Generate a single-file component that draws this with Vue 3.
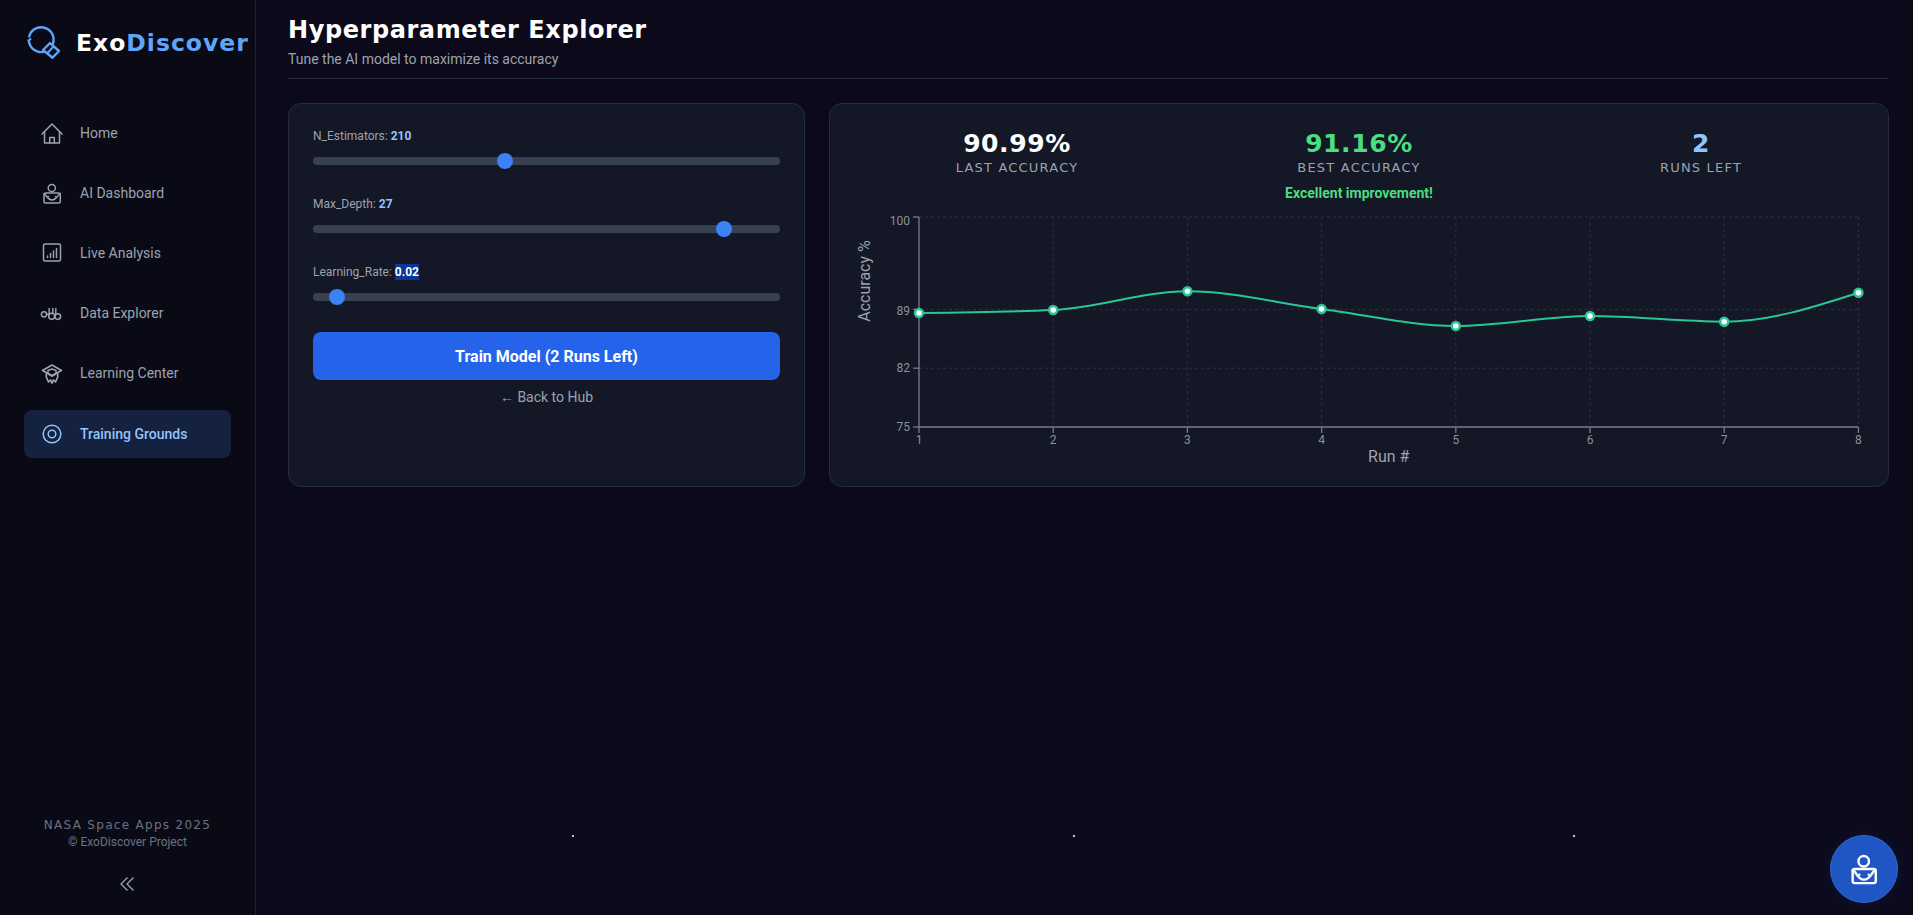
<script setup>
import { ref, computed } from 'vue'

const navItems = [
  { label: 'Home', icon: 'home' },
  { label: 'AI Dashboard', icon: 'bot' },
  { label: 'Live Analysis', icon: 'bars' },
  { label: 'Data Explorer', icon: 'data' },
  { label: 'Learning Center', icon: 'cap' },
  { label: 'Training Grounds', icon: 'target', active: true }
]

const estimators = ref(210)
const depth = ref(27)
const rate = ref(0.02)

// chart frame, in svg coordinates
const left = 65
const right = 1004.4
const top = 10
const bottom = 220
const runs = [88.57, 88.93, 91.16, 89.05, 87.02, 88.21, 87.54, 90.99]
const yTicks = [
  { v: 100, labelY: 18 },
  { v: 89, labelY: 108 },
  { v: 82, labelY: 165.3 },
  { v: 75, labelY: 224 }
]

const xOf = (i) => left + (i * (right - left)) / 7
const yOf = (v) => bottom - ((v - 75) * (bottom - top)) / 25

const points = computed(() => runs.map((v, i) => ({ x: xOf(i), y: yOf(v) })))

// same shape as recharts type="monotone"
const linePath = computed(() => {
  const p = points.value
  const n = p.length
  const sl = []
  for (let i = 0; i < n - 1; i++) sl.push((p[i + 1].y - p[i].y) / (p[i + 1].x - p[i].x))
  const t = [sl[0]]
  for (let i = 1; i < n - 1; i++) {
    const a = sl[i - 1]
    const b = sl[i]
    t.push(a * b <= 0 ? 0 : (Math.sign(a) * 2 * Math.min(Math.abs(a), Math.abs(b), Math.abs(a + b) / 4)))
  }
  t.push(sl[n - 2])
  t[0] = (3 * sl[0] - t[1]) / 2
  t[n - 1] = (3 * sl[n - 2] - t[n - 2]) / 2
  let d = `M${p[0].x},${p[0].y}`
  for (let i = 0; i < n - 1; i++) {
    const h = (p[i + 1].x - p[i].x) / 3
    d += `C${p[i].x + h},${p[i].y + h * t[i]} ${p[i + 1].x - h},${p[i + 1].y - h * t[i + 1]} ${p[i + 1].x},${p[i + 1].y}`
  }
  return d
})
</script>

<template>
  <div class="app">
    <aside class="sidebar">
      <div class="brand">
        <svg class="brand-icon" viewBox="0 0 40 40" fill="none" stroke="#60a5fa" stroke-width="2.4">
          <path d="M5.200 14.500A12.400 12.400 0 1 1 6 23" stroke-linecap="round" />
          <path d="M6 23a12.400 12.400 0 0 1-1.200-5.500" />
          <path d="M4 19.500l3-3" stroke-width="2" />
          <path d="M19 28l7-6.800 9 7.800-6.500 6.700z" stroke-linejoin="round" fill="#0a0a17" />
          <path d="M29.500 24.500 23 31.500" stroke-width="2" />
        </svg>
        <span class="brand-name">Exo<span class="brand-accent">Discover</span></span>
      </div>

      <nav class="nav">
        <a v-for="item in navItems" :key="item.label" class="nav-item" :class="{ active: item.active }">
          <svg class="nav-icon" viewBox="0 0 24 24" fill="none" stroke="currentColor" stroke-width="1.5" stroke-linecap="round" stroke-linejoin="round">
            <template v-if="item.icon === 'home'">
              <path d="M2 13 12 3l10 10" />
              <path d="M4.500 11V22h15V11" />
              <path d="M9.700 22v-5.500h4.600V22" />
            </template>
            <template v-else-if="item.icon === 'bot'">
              <circle cx="11.800" cy="7" r="3.600" />
              <rect x="4" y="12" width="16.300" height="10" rx="1.500" />
              <path d="M4 13c2.500 0 3 6 8 6s5.500-6 8.300-6" />
              <path d="M8.500 15.500h.01M15.500 15.500h.01" />
            </template>
            <template v-else-if="item.icon === 'bars'">
              <rect x="3.500" y="3" width="17" height="17" rx="1.500" />
              <path d="M7.500 16.500v-1.500M10.500 16.500v-4M13.500 16.500v-6.500M16.500 16.500v-9" />
            </template>
            <template v-else-if="item.icon === 'data'">
              <circle cx="4" cy="13.300" r="2.600" />
              <circle cx="11.700" cy="15.300" r="3" />
              <circle cx="17.800" cy="15.600" r="2.800" />
              <path d="M6.600 13.300h3M9.200 7.500v6M12.800 7.500v5M15.800 7.500v6" />
            </template>
            <template v-else-if="item.icon === 'cap'">
              <path d="M12 4 2.500 9.500 12 14.500l9.500-5z" stroke-width="1.7" />
              <path d="M6.300 11.800V16l2.200 5 2-2 1.500 3 1.500-3 2 2 2.200-5v-4.200" stroke-width="1.7" />
              <path d="M8 9.500 12 8l4 1.500v3.500l-4 2.500-4-2.500z" stroke-width="1.4" />
            </template>
            <template v-else>
              <circle cx="12" cy="12" r="8.800" />
              <circle cx="12" cy="12" r="3.800" />
            </template>
          </svg>
          <span>{{ item.label }}</span>
        </a>
      </nav>

      <div class="side-foot">
        <div class="foot-title">NASA Space Apps 2025</div>
        <div class="foot-sub">© ExoDiscover Project</div>
        <svg class="collapse" viewBox="0 0 20 20" fill="none" stroke="#9ca3af" stroke-width="1.3">
          <path d="M9.500 3.500 3 10l6.500 6.500" />
          <path d="M15.500 3.500 9 10l6.500 6.500" />
        </svg>
      </div>
    </aside>

    <main class="main">
      <header class="page-head">
        <h1>Hyperparameter Explorer</h1>
        <p>Tune the AI model to maximize its accuracy</p>
      </header>

      <div class="panels">
        <section class="panel controls">
          <div class="field">
            <label>N_Estimators: <b>{{ estimators }}</b></label>
            <input v-model.number="estimators" type="range" min="10" max="500" step="10" />
          </div>
          <div class="field">
            <label>Max_Depth: <b>{{ depth }}</b></label>
            <input v-model.number="depth" type="range" min="2" max="30" step="1" />
          </div>
          <div class="field">
            <label>Learning_Rate: <b class="selected">{{ rate.toFixed(2) }}</b></label>
            <input v-model.number="rate" type="range" min="0.01" max="0.3" step="0.01" />
          </div>
          <button class="train">Train Model (2 Runs Left)</button>
          <a class="back"><span class="arrow">←</span> Back to Hub</a>
        </section>

        <section class="panel results">
          <div class="stats">
            <div class="stat">
              <div class="stat-value">90.99%</div>
              <div class="stat-label">LAST ACCURACY</div>
            </div>
            <div class="stat">
              <div class="stat-value green">91.16%</div>
              <div class="stat-label">BEST ACCURACY</div>
            </div>
            <div class="stat">
              <div class="stat-value blue">2</div>
              <div class="stat-label">RUNS LEFT</div>
            </div>
          </div>
          <div class="message">Excellent improvement!</div>

          <svg class="chart" viewBox="0 0 1009 255" width="1009" height="255">
            <g class="grid">
              <line v-for="t in yTicks" :key="t.v" :x1="left" :x2="right" :y1="yOf(t.v)" :y2="yOf(t.v)" />
              <line v-for="(r, i) in runs" :key="i" :x1="xOf(i)" :x2="xOf(i)" :y1="top" :y2="bottom" />
            </g>
            <g class="axis">
              <line :x1="left" :x2="left" :y1="top" :y2="bottom" />
              <line :x1="left" :x2="right" :y1="bottom" :y2="bottom" />
              <line v-for="t in yTicks" :key="t.v" :x1="left - 6" :x2="left" :y1="yOf(t.v)" :y2="yOf(t.v)" />
              <line v-for="(r, i) in runs" :key="i" :x1="xOf(i)" :x2="xOf(i)" :y1="bottom" :y2="bottom + 6" />
            </g>
            <g class="ticks">
              <text v-for="t in yTicks" :key="t.v" :x="left - 9" :y="t.labelY" text-anchor="end">{{ t.v }}</text>
              <text v-for="(r, i) in runs" :key="i" :x="xOf(i)" :y="bottom + 16.5" text-anchor="middle">{{ i + 1 }}</text>
            </g>
            <text class="axis-title" x="534.7" y="254.5" text-anchor="middle">Run #</text>
            <text class="axis-title" text-anchor="middle" transform="translate(16 74) rotate(-90)">Accuracy %</text>
            <path class="line" :d="linePath" />
            <circle v-for="(p, i) in points" :key="i" class="dot" :cx="p.x" :cy="p.y" r="4" />
          </svg>
        </section>
      </div>

      <i class="star star-1"></i>
      <i class="star star-2"></i>
      <i class="star star-3"></i>
    </main>

    <button class="assistant">
      <svg viewBox="0 0 24 24" fill="none" stroke="#fff" stroke-width="1.7" stroke-linecap="round" stroke-linejoin="round">
        <circle cx="11.800" cy="6.500" r="3.700" />
        <rect x="4" y="12" width="16.300" height="10" rx="1.500" />
        <path d="M4 13c2.500 0 3 6.500 8 6.500s5.500-6.500 8.300-6.500" />
        <path d="M8.700 16h.01M15.300 16h.01" />
      </svg>
    </button>
  </div>
</template>

<style>
html,
body {
  margin: 0;
  background: #0a0a1a;
}
</style>

<style scoped>
.app {
  display: flex;
  height: 100vh;
  overflow: hidden;
  position: relative;
  background: #0c0a1a;
  color: #9ca3af;
  font-family: Roboto, "Noto Sans", sans-serif;
}

.sidebar {
  width: 255px;
  flex: none;
  display: flex;
  flex-direction: column;
  background: #0a0a17;
  border-right: 1px solid #1f2430;
}

.brand {
  height: 84px;
  display: flex;
  align-items: center;
  gap: 12px;
  padding-left: 24px;
}

.brand-icon {
  width: 40px;
  height: 40px;
  flex: none;
}

.brand-name {
  font-family: "DejaVu Sans", sans-serif;
  font-size: 23.5px;
  font-weight: 700;
  letter-spacing: 1px;
  color: #fff;
  white-space: nowrap;
  position: relative;
  top: 1px;
}

.brand-accent {
  color: #60a5fa;
}

.nav {
  display: flex;
  flex-direction: column;
  gap: 12px;
  padding: 25px 24px 0;
}

.nav-item {
  height: 48px;
  box-sizing: border-box;
  display: flex;
  align-items: center;
  gap: 16px;
  padding-left: 16px;
  border-radius: 8px;
  font-size: 14px;
}

.nav-item.active {
  margin-top: 1px;
  padding-bottom: 1px;
  background: #14213f;
  color: #93c5fd;
  font-weight: 500;
}

.nav-icon {
  width: 24px;
  height: 24px;
  flex: none;
}

.side-foot {
  margin-top: auto;
  padding-bottom: 21px;
  display: flex;
  flex-direction: column;
  align-items: center;
  color: #6b7280;
}

.foot-title {
  font-family: "DejaVu Sans", sans-serif;
  font-size: 12px;
  line-height: 16px;
  letter-spacing: 1.3px;
  white-space: nowrap;
}

.foot-sub {
  font-size: 12px;
  line-height: 16px;
  margin-top: 1px;
}

.collapse {
  width: 20px;
  height: 20px;
  margin-top: 24px;
}

.main {
  flex: 1;
  padding: 14px 24px 0 32px;
  min-width: 0;
}

.page-head {
  padding-bottom: 9px;
  border-bottom: 1px solid #1f2937;
  margin-bottom: 24px;
}

.page-head h1 {
  margin: 0;
  font-family: "DejaVu Sans", sans-serif;
  font-size: 24px;
  line-height: 32px;
  font-weight: 700;
  letter-spacing: 0.58px;
  color: #fff;
}

.page-head p {
  margin: 3px 0 0;
  font-size: 14px;
  line-height: 20px;
}

.panels {
  display: grid;
  grid-template-columns: 517px 1fr;
  gap: 24px;
}

.panel {
  background: #131726;
  border: 1px solid #262c3d;
  border-radius: 13px;
  padding: 24px;
}

.controls {
  display: flex;
  flex-direction: column;
}

.field {
  margin-bottom: 31px;
}

.field label {
  display: block;
  font-size: 12px;
  line-height: 16px;
  margin-bottom: 13px;
}

.field b {
  color: #93c5fd;
  font-weight: 700;
}

.field b.selected {
  display: inline-block;
  background: #0b3596;
  color: #fff;
}

.field input {
  display: block;
  width: 100%;
  height: 8px;
  margin: 0;
  appearance: none;
  -webkit-appearance: none;
  background: #374151;
  border-radius: 4px;
  outline: none;
}

.field input::-webkit-slider-thumb {
  -webkit-appearance: none;
  width: 16px;
  height: 16px;
  border-radius: 50%;
  background: #3b82f6;
}

.train {
  height: 48px;
  border: none;
  border-radius: 8px;
  background: #2563eb;
  color: #fff;
  font-family: inherit;
  font-size: 16px;
  font-weight: 700;
}

.back {
  margin-top: 7px;
  font-size: 14px;
  line-height: 20px;
  text-align: center;
}

.arrow {
  font-family: "Liberation Sans", sans-serif;
}

.stats {
  display: grid;
  grid-template-columns: repeat(3, 1fr);
  gap: 16px;
  text-align: center;
}

.stat-value {
  font-family: "DejaVu Sans", sans-serif;
  font-size: 25px;
  line-height: 32px;
  font-weight: 700;
  letter-spacing: 0.6px;
  color: #fff;
}

.stat-value.green {
  color: #4ade80;
}

.stat-value.blue {
  color: #93c5fd;
}

.stat-label {
  font-family: "DejaVu Sans", sans-serif;
  font-size: 13px;
  line-height: 16px;
  letter-spacing: 1.2px;
}

.message {
  margin-top: 7px;
  text-align: center;
  font-size: 14px;
  line-height: 20px;
  font-weight: 700;
  color: #4ade80;
}

.chart {
  display: block;
  margin-top: 4px;
  overflow: visible;
}

.grid line {
  stroke: #2c3242;
  stroke-width: 1;
  stroke-dasharray: 3 3;
}

.axis line {
  stroke: #777b87;
  stroke-width: 1.3;
}

.ticks text {
  font-size: 12px;
  fill: #8c919c;
}

.axis-title {
  font-size: 16px;
  fill: #9ca3af;
}

.line {
  fill: none;
  stroke: #2ac795;
  stroke-width: 2;
}

.dot {
  fill: #fff;
  stroke: #2ac795;
  stroke-width: 2.5;
}

.star {
  position: absolute;
  width: 2px;
  height: 2px;
  top: 835px;
  background: #fff;
  border-radius: 50%;
}

.star-1 {
  left: 572px;
}

.star-2 {
  left: 1073px;
}

.star-3 {
  left: 1573px;
}

.assistant {
  position: absolute;
  right: 15px;
  bottom: 12px;
  width: 68px;
  height: 68px;
  padding: 0;
  display: flex;
  align-items: center;
  justify-content: center;
  border: 1px solid #2f6ad8;
  border-radius: 50%;
  background: #2056c4;
  box-shadow: 0 0 24px rgba(37, 99, 235, 0.12);
}

.assistant svg {
  width: 34px;
  height: 34px;
}
</style>
